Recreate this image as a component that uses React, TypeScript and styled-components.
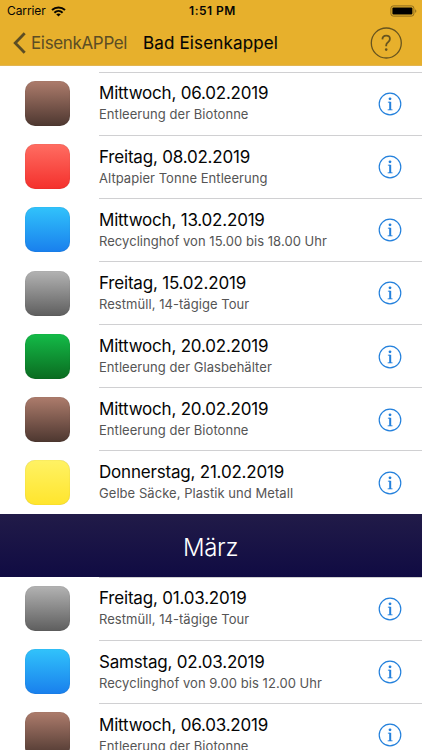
import React from "react";
import styled, { createGlobalStyle } from "styled-components";

const GlobalStyle = createGlobalStyle`
  * { box-sizing: border-box; }
  body { margin: 0; background: #fff; font-family: Inter, "Liberation Sans", sans-serif; }
`;

const Screen = styled.div`
  width: 422px;
  height: 750px;
  overflow: hidden;
  background: #fff;
  color: #050505;
`;

const Header = styled.header`
  height: 66px;
  background: #e7b02c;
  border-bottom: 1px solid #e2b551;
`;

const StatusBar = styled.div`
  height: 22px;
  display: grid;
  grid-template-columns: 1fr auto 1fr;
  align-items: center;
  padding: 0 5px 0 7px;
`;

const Carrier = styled.div`
  display: flex;
  align-items: center;
  gap: 5px;
  font-size: 12px;
  line-height: 22px;
  letter-spacing: -0.1px;
`;

const Clock = styled.div`
  padding-left: 1px;
  font-size: 12px;
  line-height: 22px;
  font-weight: 600;
  letter-spacing: 0.5px;
`;

const Battery = styled.div`
  display: flex;
  justify-content: flex-end;
`;

const NavBar = styled.nav`
  height: 42px;
  display: flex;
  align-items: center;
  padding: 0 20px 0 13px;
`;

const BackButton = styled.a`
  display: flex;
  align-items: center;
  gap: 5px;
  width: 130px;
  color: #5c4d24;
  font-size: 17px;
  line-height: 22px;
  letter-spacing: -0.35px;
`;

const Title = styled.h1`
  flex: 1;
  margin: 0;
  font-size: 17px;
  font-weight: 400;
  line-height: 22px;
  letter-spacing: 0.15px;
  -webkit-text-stroke: 0.1px #050505;
`;

const List = styled.main`
  padding-top: 5.7px;
`;

const Row = styled.div`
  height: 63.13px;
  display: flex;
`;

const Swatch = styled.div<{ $from: string; $to: string }>`
  flex: none;
  width: 45px;
  height: 45px;
  margin: 9.5px 29px 0 25px;
  border-radius: 10px;
  background: linear-gradient(${(p) => p.$from}, ${(p) => p.$to});
  box-shadow: inset 0 0 1px rgba(0, 0, 0, 0.25);
`;

const Body = styled.div`
  flex: 1;
  display: flex;
  justify-content: space-between;
  padding: 10.7px 20px 0 0;
  border-top: 1px solid #d0d0d2;
`;

const DateText = styled.div`
  font-size: 17px;
  line-height: 20px;
  letter-spacing: -0.2px;
  white-space: nowrap;
`;

const Detail = styled.div`
  margin-top: 3px;
  font-size: 13px;
  line-height: 16px;
  letter-spacing: 0.05px;
  color: #555;
  white-space: nowrap;
`;

const InfoButton = styled.span`
  margin-top: 8.7px;
  height: 24px;
`;

const Month = styled.h2`
  height: 63.13px;
  margin: 0;
  display: flex;
  align-items: center;
  justify-content: center;
  padding: 4px 1px 0 0;
  background: linear-gradient(#211b48, #100b43);
  color: #fff;
  font-size: 24px;
  font-weight: 300;
  letter-spacing: -0.3px;
`;

const swatches = {
  brown: ["#ad7c6c", "#4d3730"],
  red: ["#ff6d62", "#f4302c"],
  blue: ["#31c3fb", "#197fed"],
  grey: ["#b3b3b3", "#5e5e5e"],
  green: ["#14bb48", "#0a6b20"],
  yellow: ["#fff264", "#ffe52d"],
};

type Pickup = { color: keyof typeof swatches; date: string; detail: string };

const february: Pickup[] = [
  { color: "brown", date: "Mittwoch, 06.02.2019", detail: "Entleerung der Biotonne" },
  { color: "red", date: "Freitag, 08.02.2019", detail: "Altpapier Tonne Entleerung" },
  { color: "blue", date: "Mittwoch, 13.02.2019", detail: "Recyclinghof von 15.00 bis 18.00 Uhr" },
  { color: "grey", date: "Freitag, 15.02.2019", detail: "Restmüll, 14-tägige Tour" },
  { color: "green", date: "Mittwoch, 20.02.2019", detail: "Entleerung der Glasbehälter" },
  { color: "brown", date: "Mittwoch, 20.02.2019", detail: "Entleerung der Biotonne" },
  { color: "yellow", date: "Donnerstag, 21.02.2019", detail: "Gelbe Säcke, Plastik und Metall" },
];

const march: Pickup[] = [
  { color: "grey", date: "Freitag, 01.03.2019", detail: "Restmüll, 14-tägige Tour" },
  { color: "blue", date: "Samstag, 02.03.2019", detail: "Recyclinghof von 9.00 bis 12.00 Uhr" },
  { color: "brown", date: "Mittwoch, 06.03.2019", detail: "Entleerung der Biotonne" },
];

const WifiIcon = () => (
  <svg width="15" height="11" viewBox="0 0 15 11" fill="none" stroke="#080600" strokeWidth="2">
    <path d="M1 4.1C4.7.7 10.3.7 14 4.1" />
    <path d="M3.4 6.7c2.4-2.2 5.8-2.2 8.2 0" />
    <path d="M7.5 10.6 5.2 8.3c1.3-1.2 3.3-1.2 4.6 0Z" fill="#080600" stroke="none" />
  </svg>
);

const BatteryIcon = () => (
  <svg width="27" height="12" viewBox="0 0 27 12">
    <rect x=".9" y=".9" width="23" height="10.2" rx="2.4" fill="none" stroke="#8c6b1c" />
    <rect x="2.4" y="2.4" width="20" height="7.2" rx="1" fill="#000" />
    <path d="M25.2 4.2c1.5.5 1.5 3.1 0 3.6Z" fill="#8c6b1c" />
  </svg>
);

const BackIcon = () => (
  <svg width="13" height="22" viewBox="0 0 13 22" fill="none" stroke="#5c4d24" strokeWidth="2.8">
    <path d="M11.7 1.3 2.2 11l9.5 9.7" />
  </svg>
);

const HelpIcon = () => (
  <svg width="32" height="32" viewBox="0 0 32 32" fill="none" stroke="#67541f">
    <circle cx="16.3" cy="16" r="15" strokeWidth="1.3" />
    <path d="M12.4 12.4c.1-2.3 1.5-3.7 3.8-3.7 2.2 0 3.7 1.3 3.7 3.3 0 1.5-.7 2.4-1.9 3.3-1.3.9-1.8 1.7-1.8 3v1" strokeWidth="1.8" />
    <circle cx="16.2" cy="22.6" r="1.3" fill="#67541f" stroke="none" />
  </svg>
);

const InfoIcon = () => (
  <svg width="24" height="24" viewBox="0 0 24 24" fill="none" stroke="#2380dc">
    <circle cx="12" cy="12" r="10.8" strokeWidth="1.2" />
    <circle cx="12" cy="6.8" r="1.4" fill="#2380dc" stroke="none" />
    <path d="M9.9 10.2h2.2M9.7 17.8h4.8" strokeWidth=".9" />
    <path d="M12.2 9.8v8.2" strokeWidth="2" />
  </svg>
);

const PickupRow = ({ color, date, detail }: Pickup) => (
  <Row>
    <Swatch $from={swatches[color][0]} $to={swatches[color][1]} />
    <Body>
      <div>
        <DateText>{date}</DateText>
        <Detail>{detail}</Detail>
      </div>
      <InfoButton><InfoIcon /></InfoButton>
    </Body>
  </Row>
);

export default function App() {
  return (
    <>
      <GlobalStyle />
      <Screen>
        <Header>
          <StatusBar>
            <Carrier>Carrier <WifiIcon /></Carrier>
            <Clock>1:51 PM</Clock>
            <Battery><BatteryIcon /></Battery>
          </StatusBar>
          <NavBar>
            <BackButton><BackIcon />EisenkAPPel</BackButton>
            <Title>Bad Eisenkappel</Title>
            <HelpIcon />
          </NavBar>
        </Header>
        <List>
          {february.map((p, i) => <PickupRow key={i} {...p} />)}
          <Month>März</Month>
          {march.map((p, i) => <PickupRow key={i} {...p} />)}
        </List>
      </Screen>
    </>
  );
}
